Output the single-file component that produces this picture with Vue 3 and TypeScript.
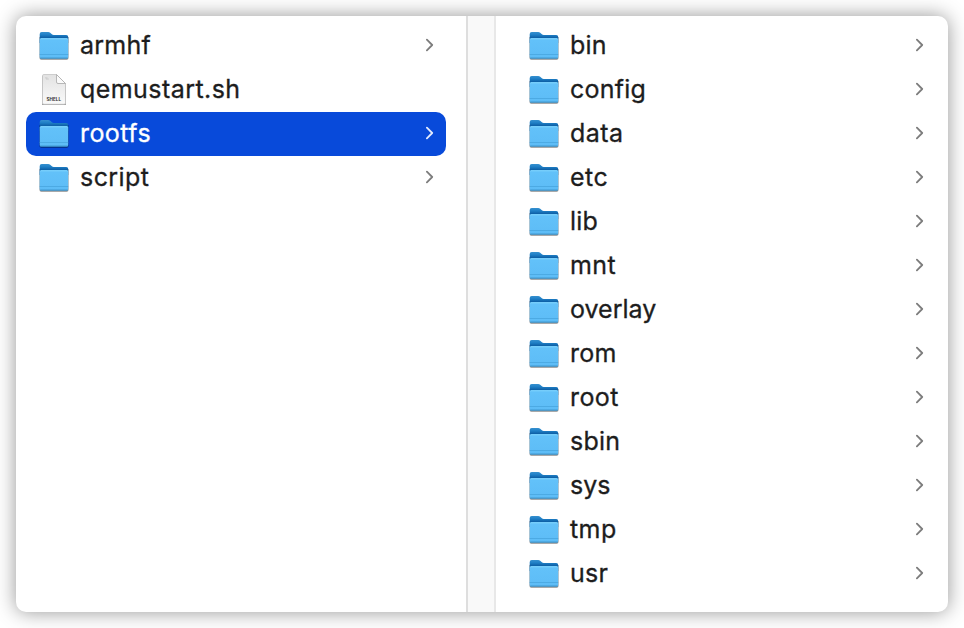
<script setup lang="ts">
interface Entry {
  name: string
  kind: 'folder' | 'shell'
  selected?: boolean
}

const folder = (name: string, selected = false): Entry => ({ name, kind: 'folder', selected })

const columns: Entry[][] = [
  [folder('armhf'), { name: 'qemustart.sh', kind: 'shell' }, folder('rootfs', true), folder('script')],
  ['bin', 'config', 'data', 'etc', 'lib', 'mnt', 'overlay', 'rom', 'root', 'sbin', 'sys', 'tmp', 'usr'].map((n) => folder(n)),
]

const tracking = (name: string): string => (name.includes('t') ? 'wide' : name.includes('y') ? 'tight' : 'regular')
</script>

<template>
  <main class="desktop">
    <svg class="defs" width="0" height="0" aria-hidden="true">
      <defs>
        <linearGradient id="folder-back" x1="0" y1="0" x2="0" y2="1">
          <stop offset="0" stop-color="#3590cf" />
          <stop offset="0.25" stop-color="#1f7fc6" />
          <stop offset="0.5" stop-color="#0f62a8" />
          <stop offset="1" stop-color="#0f62a8" />
        </linearGradient>
        <linearGradient id="folder-front" x1="0" y1="0" x2="0" y2="1">
          <stop offset="0" stop-color="#7ad0fb" />
          <stop offset="0.12" stop-color="#62c1f9" />
          <stop offset="1" stop-color="#5dbcf6" />
        </linearGradient>
        <linearGradient id="paper" x1="0" y1="0" x2="0" y2="1">
          <stop offset="0" stop-color="#e2e2e2" />
          <stop offset="1" stop-color="#fafafa" />
        </linearGradient>
      </defs>
    </svg>
    <div class="window">
      <template v-for="(entries, index) in columns" :key="index">
        <div v-if="index > 0" class="divider"></div>
        <ul class="column">
          <li v-for="entry in entries" :key="entry.name" class="row" :class="{ selected: entry.selected }">
            <svg v-if="entry.kind === 'folder'" class="icon" viewBox="0 0 32 32">
              <path class="shade" d="M1.5 8H30.5V29Q30.5 30.8 28.7 30.8H3.3Q1.5 30.8 1.5 29Z" />
              <path d="M1.7 5Q1.7 3.1 3.7 3.1H10.2Q11.4 3.1 12.2 3.8L13.9 5.3Q14.7 6 15.7 6H28.2Q30.2 6 30.2 8V14H1.7Z" fill="url(#folder-back)" />
              <path d="M1.7 10.6Q1.7 9 3.3 9H28.6Q30.2 9 30.2 10.6V28Q30.2 29.6 28.6 29.6H3.3Q1.7 29.6 1.7 28Z" fill="url(#folder-front)" />
              <path d="M1.7 25.5H30.2" stroke="#47a5de" stroke-width="0.8" />
              <path d="M2.2 29.1H29.7" stroke="#3a8fc5" stroke-width="1" />
            </svg>
            <svg v-else class="icon" viewBox="0 0 32 32">
              <path class="shade" d="M4.2 3H18.6L27.8 11.5V32H4.2Z" />
              <path d="M4.5 2.9Q4.5 1.5 5.9 1.5H18.5L27.5 10.5V30Q27.5 31.3 26.1 31.3H5.9Q4.5 31.3 4.5 30Z" fill="url(#paper)" stroke="#c4c4c4" stroke-width="0.8" />
              <path d="M18.5 1.5V9Q18.5 10.5 20 10.5H27.5Z" fill="#fafafa" stroke="#a8a8a8" stroke-width="0.8" />
              <path d="M7 4.9H9.5M8 6H10.8" stroke="#bbbbbb" stroke-width="0.6" />
              <text x="15.8" y="27.8" text-anchor="middle" textLength="14.4" lengthAdjust="spacingAndGlyphs" class="badge">SHELL</text>
            </svg>
            <span class="name" :class="tracking(entry.name)">{{ entry.name }}</span>
            <svg class="chevron" v-if="entry.kind === 'folder'" viewBox="0 0 8 14">
              <path d="M0.9 1.7L6.2 7L0.9 12.3" />
            </svg>
          </li>
        </ul>
      </template>
    </div>
  </main>
</template>

<style>
body {
  background: #fff;
  overflow: hidden;
}
</style>

<style scoped>
.desktop {
  box-sizing: border-box;
  width: 964px;
  height: 628px;
  padding: 16px;
  overflow: hidden;
}
.defs {
  display: block;
}
.window {
  display: grid;
  grid-template-columns: 450px 30px 452px;
  height: 596px;
  border-radius: 10px;
  overflow: hidden;
  background: #fff;
  box-shadow: 0 0 20px rgba(0, 0, 0, 0.42);
}
.divider {
  box-sizing: border-box;
  border-left: 2px solid #dedede;
  border-right: 2px solid #e8e8e8;
  background: #f9f9f9;
}
.column {
  margin: 0;
  padding: 8px 20px 0 10px;
  list-style: none;
}
.divider + .column {
  padding-left: 20px;
}
.row {
  display: flex;
  align-items: center;
  box-sizing: border-box;
  height: 44px;
  padding: 0 12px 2px;
  border-radius: 10px;
  color: #1d1d1d;
  font: 400 25px/42px Inter, 'Liberation Sans', sans-serif;
}
.divider + .column .row {
  padding-right: 4px;
}
.selected {
  background: #084ada;
  color: #fff;
}
.icon {
  flex: none;
  width: 32px;
  height: 32px;
  margin-right: 10px;
  overflow: visible;
}
.shade {
  fill: rgba(0, 0, 0, 0.45);
  filter: blur(0.7px);
}
.badge {
  font: 700 4.2px Inter, sans-serif;
  fill: #333;
}
.name {
  flex: 1;
  -webkit-text-stroke: 0.3px currentColor;
}
.wide {
  letter-spacing: 0.44px;
}
.regular {
  letter-spacing: 0.25px;
}
.tight {
  letter-spacing: 0;
}
.chevron {
  flex: none;
  width: 8px;
  height: 14px;
}
.chevron path {
  fill: none;
  stroke: #7d7d7d;
  stroke-width: 1.8;
  stroke-linecap: round;
  stroke-linejoin: round;
}
.selected .chevron path {
  stroke: #e2eafd;
}
</style>
